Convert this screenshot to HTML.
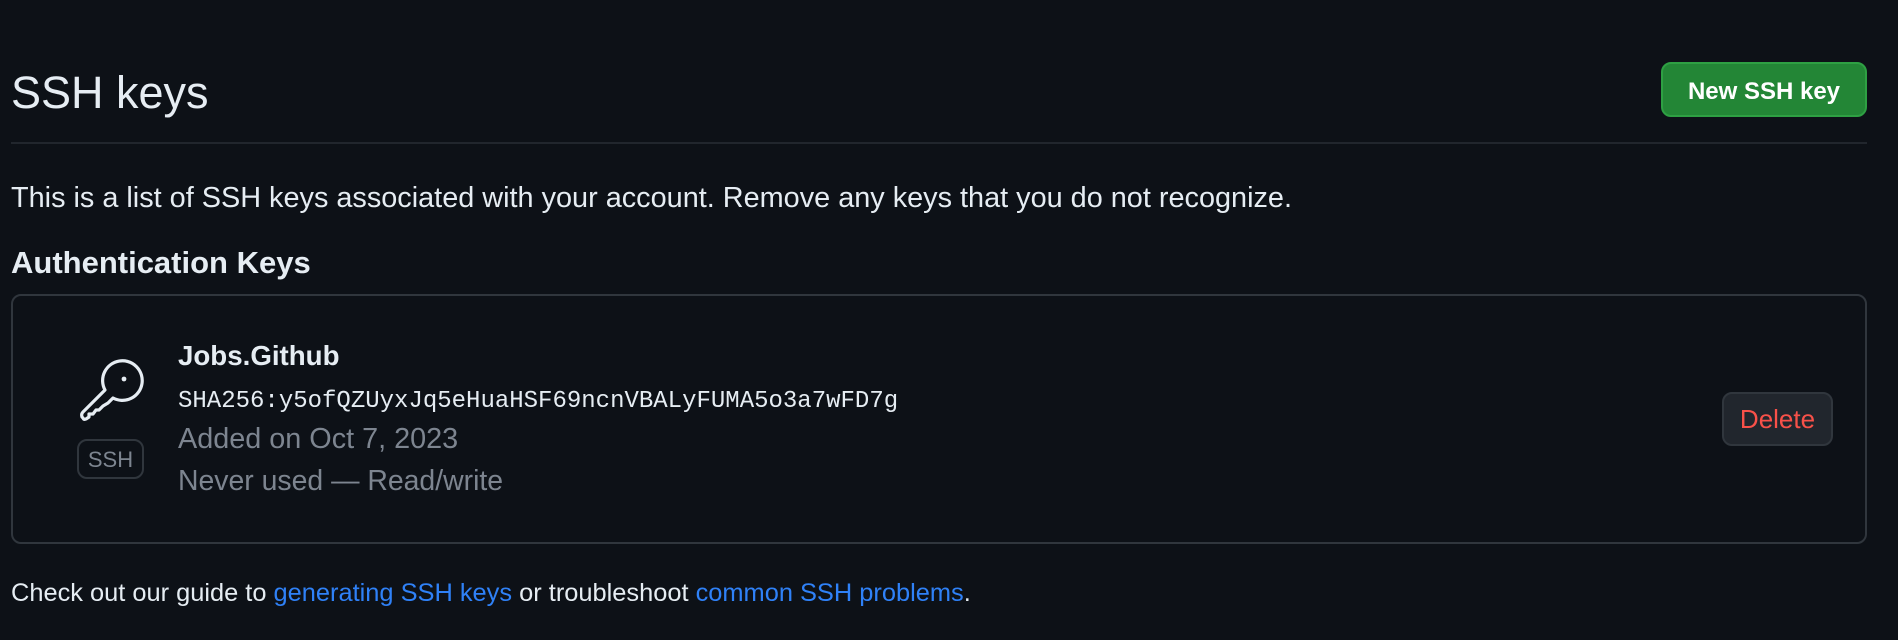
<!DOCTYPE html>
<html><head><meta charset="utf-8"><style>
body{margin:0;width:1898px;height:640px;background:#0d1117;font-family:"Liberation Sans",sans-serif;color:#e6edf3;position:relative;overflow:hidden}
.a{position:absolute;line-height:1;white-space:nowrap}
.muted{color:#7d8590}
a{color:#2f81f7;text-decoration:none}
</style></head><body>
<div class="a" style="left:11px;top:70px;font-size:45px">SSH keys</div>
<div class="a" style="left:1661px;top:62px;width:202px;height:51px;background:#238636;border:2px solid #2ea043;border-radius:10px;box-sizing:content-box"></div>
<div class="a" style="left:1661px;top:80px;width:206px;text-align:center;font-size:24px;font-weight:bold;color:#fff">New SSH key</div>
<div class="a" style="left:11px;top:142px;width:1856px;height:2px;background:#21262d"></div>
<div class="a" style="left:11px;top:184px;font-size:28.85px">This is a list of SSH keys associated with your account. Remove any keys that you do not recognize.</div>
<div class="a" style="left:11px;top:247px;font-size:31px;font-weight:bold">Authentication Keys</div>
<div class="a" style="left:11px;top:294px;width:1852px;height:246px;border:2px solid #30363d;border-radius:10px"></div>
<svg class="a" style="left:70px;top:350px" width="80" height="80" viewBox="0 0 80 80" fill="none" stroke="#e6edf3" stroke-width="3.2" stroke-linejoin="round" stroke-linecap="round">
<path d="M35 40 L13 62 Q11 64 12 67 L13 68 Q14 70 16 69 L19 67 L19 64 L23 64 L26 60 L29 60 L33 56 L38 53 L43 48 A19.8 19.8 0 1 0 35 40 Z"/>
<circle cx="54" cy="29" r="2.4" fill="#e6edf3" stroke="none"/>
</svg>
<div class="a" style="left:77px;top:439px;width:63px;height:36px;border:2px solid #30363d;border-radius:10px"></div>
<div class="a muted" style="left:77px;top:449px;width:67px;text-align:center;font-size:22px">SSH</div>
<div class="a" style="left:178px;top:342px;font-size:27.7px;font-weight:bold">Jobs.Github</div>
<div class="a" style="left:178px;top:390px;font-size:24px;font-family:'Liberation Mono',monospace">SHA256:y5ofQZUyxJq5eHuaHSF69ncnVBALyFUMA5o3a7wFD7g</div>
<div class="a muted" style="left:178px;top:425px;font-size:28.8px">Added on Oct 7, 2023</div>
<div class="a muted" style="left:178px;top:467px;font-size:28.4px">Never used — Read/write</div>
<div class="a" style="left:1722px;top:392px;width:107px;height:50px;background:#21262d;border:2px solid #30363d;border-radius:10px"></div>
<div class="a" style="left:1722px;top:406px;width:111px;text-align:center;font-size:26px;color:#f85149">Delete</div>
<div class="a" style="left:11px;top:581px;font-size:25.4px">Check out our guide to <a>generating SSH keys</a> or troubleshoot <a>common SSH problems</a>.</div>
</body></html>
